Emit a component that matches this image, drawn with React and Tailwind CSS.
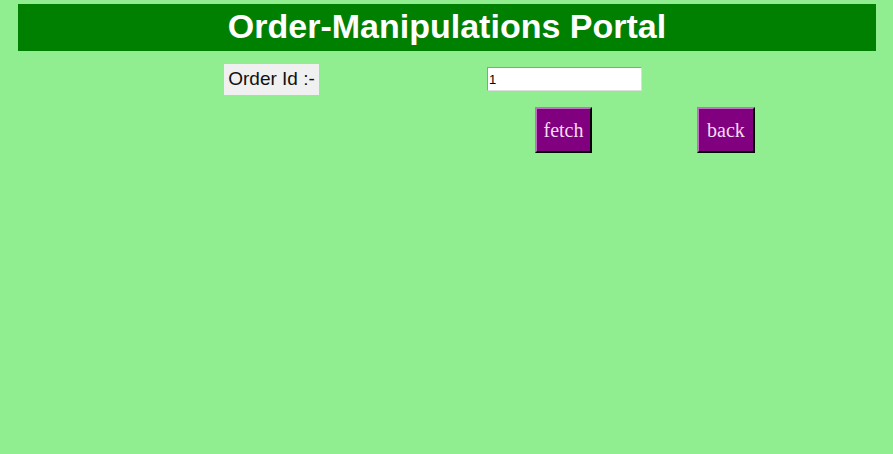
/**
 * App.jsx — order manipulations portal: header, order id field, fetch/back buttons
 */

export default function App() {
  return (
    <div className="min-h-screen w-full bg-[#90ee90] pt-[4px] font-['Liberation_Sans',Arial,sans-serif]">
      {/* Title bar */}
      <header className="ml-[18px] flex h-[47px] w-[858px] items-center justify-center bg-[#008000]">
        <h1 className="mb-[4px] text-[34px] font-bold leading-none text-white">Order-Manipulations Portal</h1>
      </header>

      {/* Order id row */}
      <div className="mt-[13px] flex items-start">
        <label
          htmlFor="orderId"
          className="ml-[224px] flex h-[31px] w-[95px] items-center justify-center bg-[#f0f0f0] text-[19px] text-[#111]"
        >
          Order Id :-
        </label>
        <input
          id="orderId"
          type="text"
          defaultValue="1"
          className="ml-[168px] mt-[3px] h-[24px] w-[155px] border border-t-[#999] border-l-[#999] border-b-[#ddd] border-r-[#ddd] bg-white px-[1px] font-['Liberation_Sans',Arial,sans-serif] text-[13px] text-black outline-none"
        />
      </div>

      {/* Action buttons */}
      <div className="mt-[12px] flex">
        <button className="ml-[535px] h-[46px] w-[57px] border-2 border-t-[#c070c0] border-l-[#c070c0] border-b-black border-r-black bg-[#800080] font-['Liberation_Serif','Times_New_Roman',serif] text-[20px] text-[#f4dcf4]">
          fetch
        </button>
        <button className="ml-[105px] h-[46px] w-[58px] border-2 border-t-[#c070c0] border-l-[#c070c0] border-b-black border-r-black bg-[#800080] font-['Liberation_Serif','Times_New_Roman',serif] text-[20px] text-[#f4dcf4]">
          back
        </button>
      </div>
    </div>
  );
}
